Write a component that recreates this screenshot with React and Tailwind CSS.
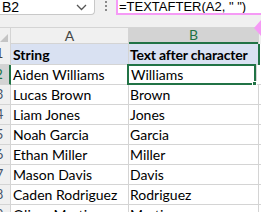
import React from 'react';

const rows = [
  ['Aiden Williams', 'Williams'],
  ['Lucas Brown', 'Brown'],
  ['Liam Jones', 'Jones'],
  ['Noah Garcia', 'Garcia'],
  ['Ethan Miller', 'Miller'],
  ['Mason Davis', 'Davis'],
  ['Caden Rodriguez', 'Rodriguez'],
  ['Oliver Martin', 'Martin'],
];

const Chevron = () => (
  <svg width="11" height="7" viewBox="0 0 11 7" fill="none">
    <path d="M1 1l4.5 4.5L10 1" stroke="#555" strokeWidth="1.3" />
  </svg>
);

export default function App() {
  return (
    <div className="w-[261px] h-[212px] overflow-hidden bg-[#f0f0f0] font-['Lato','Liberation_Sans',sans-serif] text-black relative">
      {/* formula bar */}
      <div className="flex h-[15px]">
        <div className="w-[95px] h-full bg-white border-r border-b border-[#c8c8c8] rounded-br-[4px] flex items-center justify-between pl-[2px] pr-[7px]">
          <span className="text-[14px] leading-none font-['Liberation_Sans',sans-serif]">B2</span>
          <Chevron />
        </div>
        <div className="w-[21px] flex flex-col items-center justify-start gap-[2px] pt-[1px]">
          <span className="w-[2px] h-[2px] bg-[#8a8a8a]" />
          <span className="w-[2px] h-[2px] bg-[#8a8a8a]" />
          <span className="w-[2px] h-[2px] bg-[#8a8a8a]" />
        </div>
        <div className="flex-1 bg-white border-l-2 border-b-2 border-[#f59af5] flex items-center pl-[1px] overflow-hidden">
          <span className="text-[13px] leading-none font-['Liberation_Sans',sans-serif] whitespace-nowrap">=TEXTAFTER(A2, " ")</span>
        </div>
      </div>
      <div className="h-[12px]" />
      <div className="absolute right-0 top-[20px] w-0 h-0 border-t-[8px] border-t-transparent border-b-[8px] border-b-transparent border-r-[7px] border-r-[#f59af5]" />

      {/* column headers */}
      <div className="flex h-[17px] border-t border-[#d4d4d4]">
        <div className="w-[11px] relative border-r border-[#d4d4d4]">
          <div className="absolute right-[2px] bottom-[2px] w-0 h-0 border-l-[8px] border-l-transparent border-b-[8px] border-b-[#c4c4c4]" />
        </div>
        <div className="w-[118px] border-r border-b border-[#d4d4d4] flex items-center justify-center text-[14px] text-[#444] leading-none">A</div>
        <div className="w-[129px] bg-[#d3d3d3] border-b-2 border-[#217346] flex items-center justify-center text-[14px] text-[#217346] leading-none">B</div>
        <div className="flex-1 border-l border-[#d4d4d4]" />
      </div>

      {/* header row */}
      <div className="flex h-[21px]">
        <div className="w-[22px] -ml-[11px] shrink-0 border-r border-b border-[#d4d4d4] flex items-center justify-center text-[13px] text-[#444]">1</div>
        <div className="w-[118px] shrink-0 bg-[#d9e1f2] border-r border-b border-[#d4d4d4] flex items-center pl-[2px] text-[14px] font-bold">String</div>
        <div className="w-[129px] shrink-0 bg-[#d9e1f2] border-b border-[#d4d4d4] flex items-center pl-[1px] text-[14px] font-bold whitespace-nowrap overflow-hidden tracking-[-0.2px]">Text after character</div>
        <div className="flex-1 bg-white border-l-2 border-[#217346]" />
      </div>

      {rows.map(([a, b], i) => {
        const sel = i === 0;
        return (
          <div key={i} className="flex h-[20px]">
            <div
              className={
                sel
                  ? 'w-[22px] -ml-[11px] shrink-0 bg-[#d3d3d3] border-r-2 border-b border-r-[#217346] border-b-[#d4d4d4] flex items-center justify-center text-[13px] text-[#217346]'
                  : 'w-[22px] -ml-[11px] shrink-0 border-r border-b border-[#d4d4d4] flex items-center justify-center text-[13px] text-[#44546a]'
              }
            >
              {i + 2}
            </div>
            <div className="w-[118px] shrink-0 bg-white border-r border-b border-[#d4d4d4] flex items-center pl-[2px] text-[14px] whitespace-nowrap">{a}</div>
            <div
              className={
                sel
                  ? 'w-[129px] shrink-0 bg-white border-2 border-[#217346] -ml-[2px] -mt-[1px] h-[21px] flex items-center pl-[2px] text-[14px] relative'
                  : 'w-[129px] shrink-0 bg-white border-b border-[#d4d4d4] flex items-center pl-[1px] text-[14px]'
              }
            >
              {b}
              {sel && <span className="absolute -right-[3px] -bottom-[3px] w-[5px] h-[5px] bg-[#217346] border border-white" />}
            </div>
            <div className="flex-1 bg-white border-l border-b border-[#d4d4d4]" />
          </div>
        );
      })}
    </div>
  );
}
